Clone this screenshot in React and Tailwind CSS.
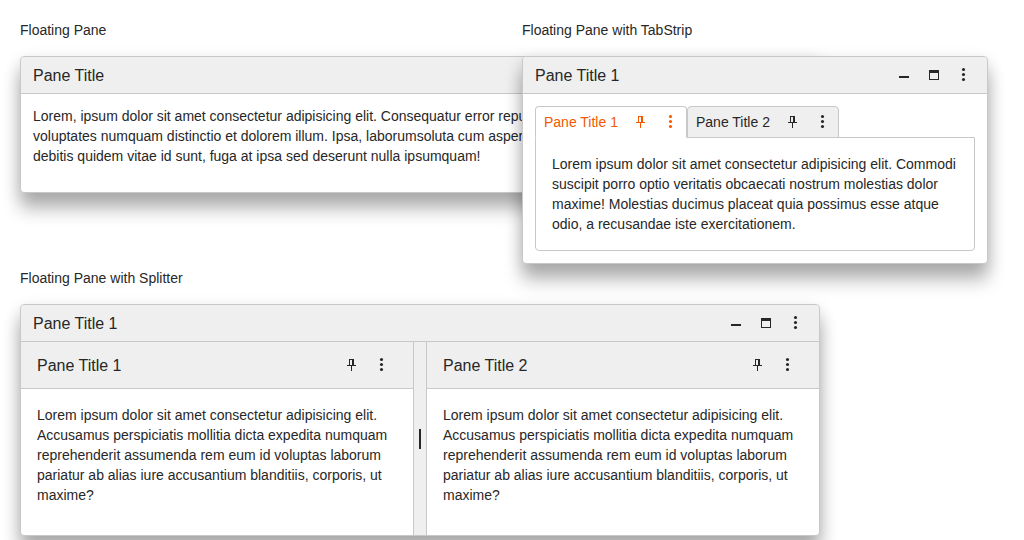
import React from "react";
import clsx from "clsx";

const Icon = ({ children, className }) => (
  <span className={clsx("flex w-[30px] shrink-0 items-center justify-center", className)}>
    <svg width="16" height="16" viewBox="0 0 16 16" fill="currentColor" shapeRendering="crispEdges">
      {children}
    </svg>
  </span>
);

const MinimizeIcon = () => (
  <Icon><path d="M3 9h10v2H3z" /></Icon>
);

const MaximizeIcon = () => (
  <Icon><path fillRule="evenodd" d="M3 3h10v10H3zM4 6v6h8V6z" /></Icon>
);

const MoreIcon = () => (
  <Icon>
    <g shapeRendering="geometricPrecision">
      <circle cx="7.5" cy="2.5" r="1.55" />
      <circle cx="7.5" cy="7.5" r="1.55" />
      <circle cx="7.5" cy="12.5" r="1.55" />
    </g>
  </Icon>
);

const PinIcon = () => (
  <Icon><path fillRule="evenodd" d="M5 2h5v6h2v1H8v5H7V9H3V8h2zM6 3v5h2V3z" /></Icon>
);

function Pane({ title, actions, className, children }) {
  return (
    <section
      className={clsx(
        "flex flex-col overflow-hidden rounded border border-[#c8c8c8] bg-white shadow-[0_16px_18px_rgba(0,0,0,0.28),0_4px_16px_rgba(0,0,0,0.12)]",
        className
      )}
    >
      <header className="flex h-[37px] shrink-0 items-center border-b border-[#c8c8c8] bg-[#efefef] pl-3 pr-2">
        <h2 className="flex-1 pt-0.5 text-base leading-5">{title}</h2>
        {actions && (
          <div className="flex">
            <MinimizeIcon />
            <MaximizeIcon />
            <MoreIcon />
          </div>
        )}
      </header>
      {children}
    </section>
  );
}

function Tab({ title, active }) {
  return (
    <div
      className={clsx(
        "flex w-[152px] items-center rounded-t border border-[#c8c8c8] pl-2",
        active ? "border-b-white bg-white text-[#f35800]" : "bg-[#efefef]"
      )}
    >
      <span className="w-[82px] shrink-0">{title}</span>
      <PinIcon />
      <MoreIcon />
    </div>
  );
}

function SplitPane({ title }) {
  return (
    <div className="w-[392px]">
      <div className="flex h-[47px] items-center border-b border-[#c8c8c8] bg-[#efefef] pl-4 pr-4">
        <h3 className="flex-1 pt-0.5 text-base leading-5">{title}</h3>
        <PinIcon />
        <MoreIcon />
      </div>
      <p className="px-4 pt-4">
        Lorem ipsum dolor sit amet consectetur adipisicing elit. Accusamus perspiciatis mollitia
        dicta expedita numquam reprehenderit assumenda rem eum id voluptas laborum pariatur ab
        alias iure accusantium blanditiis, corporis, ut maxime?
      </p>
    </div>
  );
}

export default function App() {
  return (
    <main className="grid h-[540px] grid-cols-[502px_502px] grid-rows-[248px_272px] overflow-hidden bg-white pl-5 pt-5 font-['Liberation_Sans',Arial,sans-serif] text-sm leading-5 text-[#272727]">
      <div>
        <p className="mb-4">Floating Pane</p>
        <Pane title="Pane Title" className="h-[137px] w-[800px]">
          <p className="whitespace-nowrap p-3">
            Lorem, ipsum dolor sit amet consectetur adipisicing elit. Consequatur error repudiandae
            <br />
            voluptates numquam distinctio et dolorem illum. Ipsa, laborumsoluta cum asperiores
            <br />
            debitis quidem vitae id sunt, fuga at ipsa sed deserunt nulla ipsumquam!
          </p>
        </Pane>
      </div>

      <div className="relative">
        <p className="mb-4">Floating Pane with TabStrip</p>
        <Pane title="Pane Title 1" actions className="h-[208px] w-[466px]">
          <div className="p-3">
            <div className="relative -mb-px flex h-8">
              <Tab title="Pane Title 1" active />
              <Tab title="Pane Title 2" />
            </div>
            <div className="h-[114px] rounded-b border border-[#c8c8c8] p-4">
              Lorem ipsum dolor sit amet consectetur adipisicing elit. Commodi suscipit porro optio
              veritatis obcaecati nostrum molestias dolor maxime! Molestias ducimus placeat quia
              possimus esse atque odio, a recusandae iste exercitationem.
            </div>
          </div>
        </Pane>
      </div>

      <div className="relative">
        <p className="mb-4">Floating Pane with Splitter</p>
        <Pane title="Pane Title 1" actions className="h-[232px] w-[800px]">
          <div className="flex flex-1">
            <SplitPane title="Pane Title 1" />
            <div className="flex w-[14px] items-center justify-center border-x border-[#c8c8c8] bg-[#efefef]">
              <div className="h-5 w-0.5 bg-[#272727]" />
            </div>
            <SplitPane title="Pane Title 2" />
          </div>
        </Pane>
      </div>
    </main>
  );
}
